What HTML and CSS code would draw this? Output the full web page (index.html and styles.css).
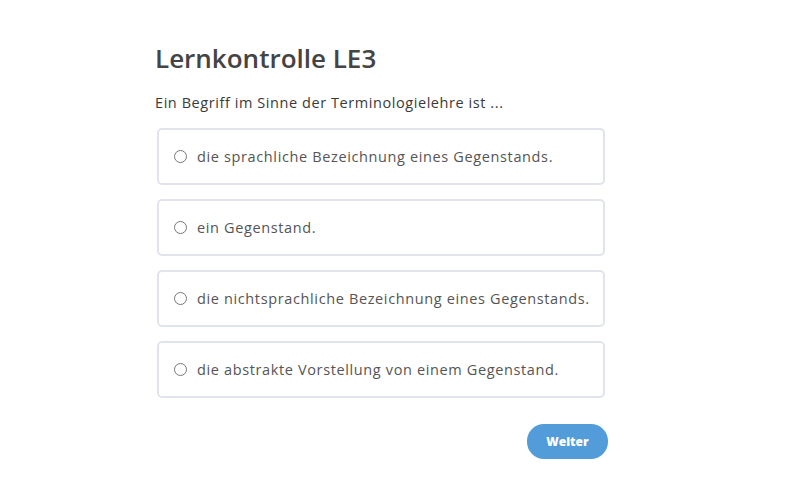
FILE: index.html
```html
<!DOCTYPE html>
<html lang="de">
<head>
<meta charset="utf-8">
<title>Lernkontrolle LE3</title>
<link rel="stylesheet" href="styles.css">
</head>
<body>
<main class="quiz">
  <h1 class="title">Lernkontrolle LE3</h1>
  <p class="question">Ein Begriff im Sinne der Terminologielehre ist ...</p>
  <div class="options">
    <label class="option"><span class="radio"></span><span class="label">die sprachliche Bezeichnung eines Gegenstands.</span></label>
    <label class="option"><span class="radio"></span><span class="label">ein Gegenstand.</span></label>
    <label class="option"><span class="radio"></span><span class="label">die nichtsprachliche Bezeichnung eines Gegenstands.</span></label>
    <label class="option"><span class="radio"></span><span class="label">die abstrakte Vorstellung von einem Gegenstand.</span></label>
  </div>
  <div class="actions">
    <button class="next">Weiter</button>
  </div>
</main>
</body>
</html>
```

FILE: styles.css
```css
html, body {
  margin: 0;
  padding: 0;
  background: #ffffff;
}
body {
  font-family: "Open Sans", "Noto Sans", sans-serif;
}
.quiz {
  width: 453px;
  margin-left: 155px;
  padding-top: 38px;
}
.title {
  margin: 0;
  font-family: "Open Sans", sans-serif;
  font-size: 26px;
  font-weight: 600;
  color: #444444;
  line-height: 40px;
}
.question {
  margin: 15px 0 0 0;
  font-size: 14.5px;
  line-height: 20px;
  color: #3a3a3a;
  letter-spacing: 0.57px;
}
.options {
  display: flex;
  flex-direction: column;
  gap: 14px;
  margin: 15px 3px 0 2px;
}
.option {
  display: flex;
  align-items: center;
  height: 57px;
  box-sizing: border-box;
  border: 2px solid #e1e4ec;
  border-radius: 5px;
  padding-left: 15px;
}
.radio {
  width: 11px;
  height: 11px;
  border: 1px solid #777777;
  border-radius: 50%;
  flex: none;
}
.label {
  margin-left: 10px;
  font-size: 14.5px;
  color: #555555;
  letter-spacing: 0.63px;
}
.actions {
  display: flex;
  justify-content: flex-end;
  margin-top: 26px;
}
.next {
  width: 81px;
  height: 35px;
  border: none;
  border-radius: 17px;
  background: #519cd9;
  color: #ffffff;
  font-family: "Open Sans", sans-serif;
  font-weight: 800;
  font-size: 12px;
  cursor: pointer;
}
```
